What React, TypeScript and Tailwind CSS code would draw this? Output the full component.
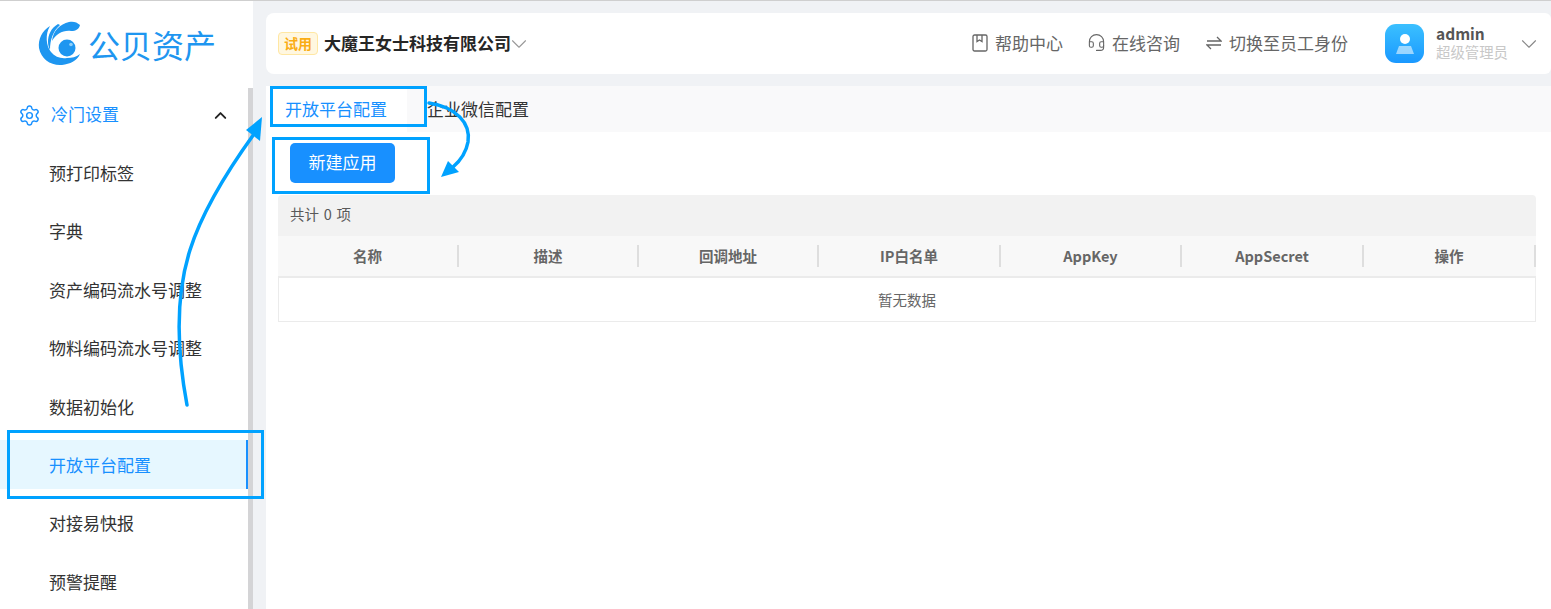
import React from "react";
import { ChevronDown, ChevronUp, Headset, Settings } from "lucide-react";

const menus = ["预打印标签", "字典", "资产编码流水号调整", "物料编码流水号调整", "数据初始化", "开放平台配置", "对接易快报", "预警提醒"];
const columns = [
  { name: "名称", width: "w-[181px]" },
  { name: "描述", width: "w-[180px]" },
  { name: "回调地址", width: "w-[180px]" },
  { name: "IP白名单", width: "w-[182px]" },
  { name: "AppKey", width: "w-[181px]" },
  { name: "AppSecret", width: "w-[182px]" },
  { name: "操作", width: "flex-1" },
];

function Logo() {
  return (
    <svg width="43" height="45" viewBox="0 0 43 45" className="shrink-0">
      <path d="M12 5 C4 10 0 18 1 27 C3 38 13 45 24 44 C32 43 39 40 42 33 C38 36 34 37 29 37 C23 38 17 36 13 31 C8 25 7 13 12 5 Z" fill="#1e96f0" />
      <path d="M20 3 C13 7 10 14 10 21 C10 24 11 27 12 29 C12 19 15 10 22 4 Z" fill="#1e96f0" />
      <path d="M31 1 C22 3 15 10 14 20 C18 13 25 9 33 10 C38 10 41 8 42 4 C39 1 35 0 31 1 Z" fill="#1e96f0" />
      <circle cx="29" cy="27" r="8.5" fill="#1e96f0" />
      <circle cx="33" cy="23.5" r="1.8" fill="#8fd0fa" />
    </svg>
  );
}

function Annotations() {
  return (
    <>
      <div className="absolute left-[270px] top-[85px] h-[41px] w-[157px] border-[3px] border-[#00a2ff]" />
      <div className="absolute left-[272px] top-[136px] h-[57px] w-[158px] border-[3px] border-[#00a2ff]" />
      <div className="absolute left-[7px] top-[429px] h-[69px] w-[257px] border-[3px] border-[#00a2ff]" />
      <svg width="1551" height="609" className="pointer-events-none absolute left-0 top-0">
        <path d="M187 404 C175 340 177 290 190 249 C202 211 228 169 254 133" fill="none" stroke="#00a2ff" strokeWidth="3.5" strokeLinecap="round" />
        <path d="M262 116 L260 140 L246 129 Z" fill="#00a2ff" />
        <path d="M429 102 C456 106 471 122 468 141 C466 152 460 160 453 166" fill="none" stroke="#00a2ff" strokeWidth="3.5" strokeLinecap="round" />
        <path d="M441 176 L448 160 L459 171 Z" fill="#00a2ff" />
      </svg>
    </>
  );
}

export default function App() {
  return (
    <div className="relative flex h-[609px] w-[1551px] overflow-hidden border-t border-[#cfcfcf] bg-[#f0f2f5] font-['Noto_Sans_CJK_SC','Liberation_Sans',sans-serif]">
      <aside className="relative w-[253px] shrink-0 bg-white">
        <div className="flex h-[85px] items-center gap-[7px] pl-[38px]">
          <Logo />
          <span className="text-[32px] leading-none text-[#1e96f0]">公贝资产</span>
        </div>
        <div className="flex h-[58px] items-center pl-[18px] pr-[23px] text-[17px] text-[#1890ff]">
          <Settings size={23} strokeWidth={1.5} />
          <span className="ml-[10px] flex-1 -translate-y-px">冷门设置</span>
          <ChevronUp size={19} strokeWidth={2.4} className="text-[#222]" />
        </div>
        <ul className="-mt-[0.5px]">
          {menus.map((m) => {
            const active = m === "开放平台配置";
            return (
              <li key={m} className="flex h-[58.4px] items-center">
                {active ? (
                  <div className="flex h-[49px] w-[248px] items-center border-r-[2.5px] border-[#1890ff] bg-[#e6f7ff] pl-[49px] text-[17px] text-[#1890ff]">{m}</div>
                ) : (
                  <div className="pl-[49px] text-[17px] text-[#333]">{m}</div>
                )}
              </li>
            );
          })}
        </ul>
        <div className="absolute bottom-0 right-0 top-[87px] w-[5px] bg-[#d4d4d6]" />
      </aside>

      <main className="ml-[13px] flex min-w-0 flex-1 flex-col pt-[12px]">
        <header className="flex h-[61px] shrink-0 items-center rounded-l-lg rounded-r-md bg-white pl-[12px] pr-[15px]">
          <span className="rounded-[4px] border border-[#ffe7a3] bg-[#fff7e0] px-[5px] text-[14px] font-bold leading-[21px] text-[#faad14]">试用</span>
          <span className="ml-[6px] -translate-y-px text-[17px] font-bold text-[#262626]">大魔王女士科技有限公司</span>
          <ChevronDown size={26} strokeWidth={1} className="-mx-[5px] text-[#999]" />
          <div className="ml-auto flex -translate-y-px items-center text-[17px] text-[#666]">
            <svg width="16" height="18" viewBox="0 0 16 18" fill="none" stroke="#666" strokeWidth="1.3">
              <rect x="1" y="1" width="14" height="16" rx="1.5" />
              <path d="M5 1 V7.5 L7.5 6 L10 7.5 V1" />
            </svg>
            <span className="ml-[7px]">帮助中心</span>
            <Headset size={19} strokeWidth={1.4} className="ml-[24px]" />
            <span className="ml-[6px]">在线咨询</span>
            <svg width="16" height="14" viewBox="0 0 16 14" fill="none" stroke="#666" strokeWidth="1.3" className="ml-[26px]">
              <path d="M1 5 H15 L11 1" />
              <path d="M15 9 H1 L5 13" />
            </svg>
            <span className="ml-[7px]">切换至员工身份</span>
          </div>
          <div className="ml-[37px] flex h-[39px] w-[39px] items-center justify-center rounded-[11px] bg-gradient-to-b from-[#3bc0ff] to-[#1a98ff]">
            <svg width="20" height="22" viewBox="0 0 20 22">
              <circle cx="10" cy="6" r="5" fill="#fff" />
              <path d="M4 13 H16 L19 21 H1 Z" fill="#fff" fillOpacity="0.55" />
            </svg>
          </div>
          <div className="ml-[12px] flex -translate-y-[1px] flex-col">
            <span className="text-[15.5px] font-bold leading-[19px] text-[#555]">admin</span>
            <span className="text-[14.4px] leading-[18px] text-[#c8c8c8]">超级管理员</span>
          </div>
          <ChevronDown size={26} strokeWidth={1} className="-mr-[6px] ml-[8px] text-[#888]" />
        </header>

        <div className="mt-[12px] flex h-[46px] shrink-0 items-center bg-[#f9f9fa] text-[17px]">
          <div className="flex h-full w-[141px] items-center bg-white pl-[19px] text-[#1890ff]">开放平台配置</div>
          <div className="pl-[20px] text-[#333]">企业微信配置</div>
        </div>

        <section className="flex-1 bg-white px-[12px] pt-[11px]">
          <button className="ml-[12px] h-[40px] w-[105px] rounded-[5px] bg-[#1890ff] pb-[2px] text-[17px] text-white">新建应用</button>
          <div className="mt-[12px] w-[1258px]">
            <div className="flex h-[41px] items-center rounded-t-[4px] bg-[#f2f2f2] pb-[3px] pl-[12px] text-[14.5px] text-[#595959] [word-spacing:1.5px]">共计 0 项</div>
            <div className="flex h-[42px] items-center border-b-2 border-[#ebebeb] bg-[#f8f8f8] text-[14.5px] font-bold text-[#666]">
              {columns.map((c) => (
                <div key={c.name} className={`${c.width} flex h-[22px] items-center justify-center border-r-2 border-[#dedede]`}>{c.name}</div>
              ))}
            </div>
            <div className="flex h-[44px] items-center justify-center border-x border-b border-[#ebebeb] text-[14.5px] text-[#666]">暂无数据</div>
          </div>
        </section>
      </main>

      <Annotations />
    </div>
  );
}
